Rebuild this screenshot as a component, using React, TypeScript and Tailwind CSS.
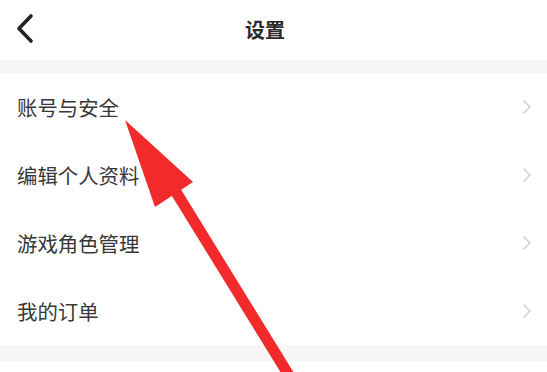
const items = ["账号与安全", "编辑个人资料", "游戏角色管理", "我的订单"];

function Chevron() {
  return (
    <svg width="12" height="16" viewBox="0 0 12 16" className="shrink-0">
      <path d="M3 2 L9 8 L3 14" fill="none" stroke="#cfcfcf" strokeWidth="1.5" strokeLinecap="round" strokeLinejoin="round" />
    </svg>
  );
}

export default function App() {
  return (
    <div
      className="relative w-[547px] h-[372px] overflow-hidden bg-white"
      style={{ fontFamily: '"Noto Sans CJK SC", "Noto Sans", sans-serif' }}
    >
      <header className="relative flex h-[60px] items-center">
        <button className="absolute left-[14px] top-[12px] flex h-[34px] w-[24px] items-center justify-center">
          <svg width="24" height="34" viewBox="0 0 24 34">
            <path d="M17 4 L5 16.5 L17 29" fill="none" stroke="#222" strokeWidth="3.6" strokeLinecap="round" strokeLinejoin="round" />
          </svg>
        </button>
        <h1 className="flex-1 pr-[17px] text-center text-[20px] font-bold leading-none text-[#2a2a2a]">设置</h1>
      </header>

      <div className="h-[13px] bg-[#f6f6f6]" />

      <ul>
        {items.map((label) => (
          <li key={label} className="flex h-[68px] items-center justify-between pl-[17px] pr-[14px]">
            <span className="text-[20.4px] leading-none text-[#383838]">{label}</span>
            <Chevron />
          </li>
        ))}
      </ul>

      <div className="h-[16px] bg-[#f6f6f6]" />

      <svg className="pointer-events-none absolute inset-0" width="547" height="372" viewBox="0 0 547 372">
        <line x1="176" y1="192" x2="298" y2="390" stroke="#f22a2c" strokeWidth="11" />
        <polygon points="125,120 193,182 155,207" fill="#f22a2c" />
      </svg>
    </div>
  );
}
